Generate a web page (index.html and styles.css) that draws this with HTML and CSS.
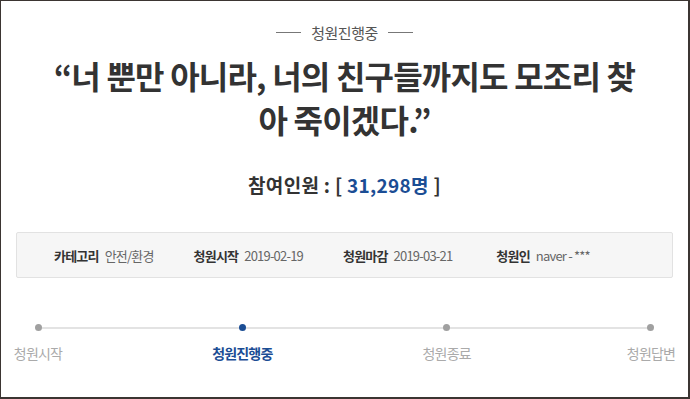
FILE: index.html
```html
<html><head>
<link rel="stylesheet" href="styles.css">
</head>
<body>
<div class="frame">
    <div class="status-tag">
        <span class="tag-line"></span>
        <span class="tag-text">청원진행중</span>
        <span class="tag-line"></span>
    </div>
    <h1 class="petition-title">“너 뿐만 아니라, 너의 친구들까지도 모조리 찾<br>아 죽이겠다.”</h1>
    <p class="count">참여인원 : [ <span class="count-num">31,298명</span> ]</p>

    <div class="info-box">
        <div class="info-item"><b>카테고리</b><span>안전/환경</span></div>
        <div class="info-item"><b>청원시작</b><span>2019-02-19</span></div>
        <div class="info-item"><b>청원마감</b><span>2019-03-21</span></div>
        <div class="info-item"><b>청원인</b><span>naver - ***</span></div>
    </div>

    <div class="progress">
        <div class="step">
            <span class="dot"></span>
            <span class="step-label">청원시작</span>
        </div>
        <div class="step active">
            <span class="dot"></span>
            <span class="step-label">청원진행중</span>
        </div>
        <div class="step">
            <span class="dot"></span>
            <span class="step-label">청원종료</span>
        </div>
        <div class="step">
            <span class="dot"></span>
            <span class="step-label">청원답변</span>
        </div>
    </div>
</div>
</body>
</html>
```

FILE: styles.css
```css
:root {
    --text-dark: #333333;
    --text-gray: #666666;
    --text-light: #aaaaaa;
    --blue: #1b4d94;
    --line: #e3e3e3;
}

html, body {
    margin: 0;
    padding: 0;
}

body {
    width: 690px;
    height: 399px;
    font-family: "Noto Sans CJK KR", "Noto Sans", sans-serif;
    color: var(--text-dark);
    background: #fff;
}

.frame {
    box-sizing: border-box;
    height: 399px;
    border: 1px solid #3b3532;
    border-right-width: 2px;
    border-bottom-width: 2px;
    padding: 17px 15px 0 15px;
    overflow: hidden;
}

.status-tag {
    display: flex;
    justify-content: center;
    align-items: center;
    gap: 10px;
    height: 28px;
}

.tag-line {
    display: block;
    width: 25px;
    height: 1px;
    background: #777;
}

.tag-text {
    font-size: 15px;
    color: #555;
    letter-spacing: -0.5px;
}

.petition-title {
    margin: 7px 0 0;
    text-align: center;
    font-size: 32px;
    line-height: 44px;
    font-weight: bold;
    letter-spacing: -0.8px;
    color: var(--text-dark);
}

.count {
    margin: 31px 0 0;
    text-align: center;
    font-size: 19px;
    line-height: 26px;
    font-weight: bold;
    letter-spacing: 0.3px;
}

.count-num {
    color: var(--blue);
}

.info-box {
    margin-top: 34px;
    height: 44px;
    display: flex;
    align-items: center;
    gap: 40px;
    padding-left: 37px;
    background: #f6f6f6;
    border: 1px solid #e2e2e2;
    border-radius: 2px;
    font-size: 13px;
    letter-spacing: -0.8px;
}

.info-item {
    display: flex;
    gap: 6px;
}

.info-item:last-child {
    margin-left: 4px;
}

.info-item b {
    color: var(--text-dark);
}

.info-item span {
    color: var(--text-gray);
}

.progress {
    position: relative;
    margin-top: 45px;
    display: flex;
    justify-content: space-between;
}

.progress::before {
    content: "";
    position: absolute;
    left: 22px;
    right: 22px;
    top: 4px;
    height: 2px;
    background: var(--line);
}

.step {
    position: relative;
    width: 44px;
    display: flex;
    flex-direction: column;
    align-items: center;
}

.dot {
    width: 7px;
    height: 7px;
    margin-top: 1px;
    border-radius: 50%;
    background: #a0a0a0;
}

.step-label {
    margin-top: 12px;
    font-size: 14px;
    white-space: nowrap;
    color: var(--text-light);
    letter-spacing: -0.8px;
}

.step.active .dot {
    background: var(--blue);
}

.step.active .step-label {
    color: var(--blue);
    font-weight: bold;
}
```
